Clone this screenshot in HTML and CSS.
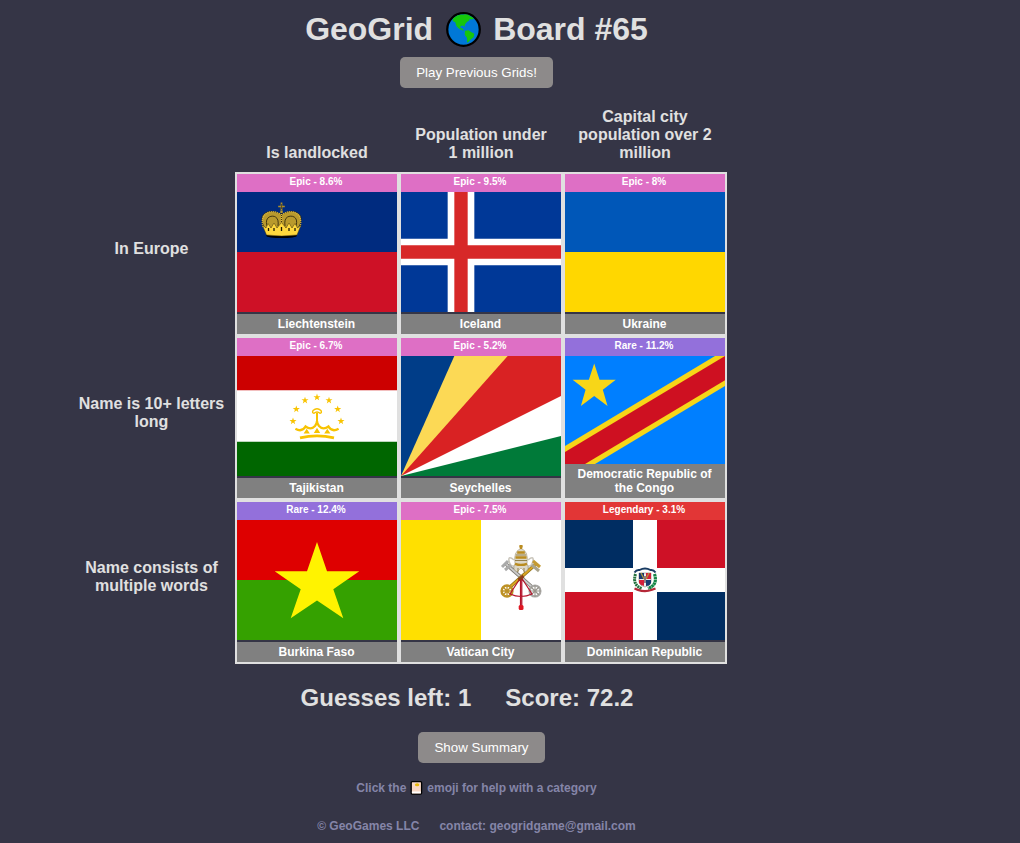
FILE: index.html
```html
<!DOCTYPE html>
<html lang="en">
<head>
<meta charset="utf-8">
<title>GeoGrid Board #65</title>
<link rel="stylesheet" href="styles.css">
</head>
<body>
<svg class="defs" width="0" height="0" aria-hidden="true">
  <defs><polygon id="star" points="0,-10 2.35,-3.09 9.51,-3.09 3.8,1.18 5.88,8.09 0,3.82 -5.88,8.09 -3.8,1.18 -9.51,-3.09 -2.35,-3.09"/></defs>
</svg>
<main class="page">
  <h1 class="title"><span>GeoGrid</span>
    <svg class="globe" viewBox="0 0 34 34">
      <circle cx="17" cy="17" r="15.8" fill="#0078d7" stroke="#000" stroke-width="2.2"/>
      <path fill="#16c60c" d="M7 6 11 3.4 15 2.4 22 3.1 27.2 6 25.3 7.4 23 6.7 22.2 8.5 20.3 9.7 18.5 12 17.8 14.6 16.7 13.1 14.2 13.5 14 15.4 16.4 16.3 17.2 18.2 15 17.6 12.4 16 10.2 13.8 9 10 6.5 8.7ZM17.5 2.2 22 2.6 20.6 5 19 4.5ZM18.4 18.3 22 17.8 24.3 19.5 27.5 21.2 26.8 24.5 24.5 26.3 22 28.8 20.5 29.8 20.4 25.2 18.2 22.2Z"/>
    </svg>
    <span>Board #65</span></h1>
  <button class="button">Play Previous Grids!</button>

  <section class="board">
    <div></div>
    <h2 class="column-label">Is landlocked</h2>
    <h2 class="column-label">Population under 1 million</h2>
    <h2 class="column-label">Capital city population over 2 million</h2>

    <h2 class="row-label">In Europe</h2>
    <div class="cell">
      <div class="rarity epic">Epic - 8.6%</div>
      <svg class="flag" viewBox="0 0 160 120">
        <path fill="#002b7f" d="M0 0h160v60H0z"/><path fill="#ce1126" d="M0 60h160v60H0z"/>
        <ellipse cx="44.6" cy="43.7" rx="15.4" ry="2.4" fill="#000"/>
        <path fill="#b99a2d" stroke="#1b1a12" stroke-width=".6" d="M28 36C24 31 24 24 27 22C32 18 38 19 43.5 22h2C51 19 57 18 62 22C65 24 65 31 61 36Z"/>
        <path fill="none" stroke="#241e0a" stroke-width=".8" d="M30 34C27 24 36 23 38.5 25Q42 27 41 34M59 34C62 24 54 23 50.5 25Q47 27 48 34M44.5 21v12"/>
        <path fill="none" stroke="#e1bd43" stroke-width="1.2" stroke-dasharray="1 1" d="M26 35C22 22 34 16 43 22M63 35C67 22 55 16 46 22M44.5 22v12"/>
        <path fill="#ffd83d" stroke="#4b3d0c" stroke-width=".5" d="M25.3 33 29 36 31 31.5 34 36 37 31 40 36 44.5 30.5 49 36 52 31 55 36 58 31.5 60.5 36 64 33 60 43Q44.5 45 29.5 43Z"/>
        <path stroke="#201a05" stroke-width="1.3" d="M31.5 36v3M37 36v3M44.5 35v4M52 36v3M58 36v3"/>
        <path stroke="#b99a2d" stroke-width="2.4" d="M44.5 18.6v2.5"/><path stroke="#ad8e2a" stroke-width="1.7" d="M44.5 10.5v8M41.2 14.5h6.6"/><path stroke="#111" stroke-width=".5" d="M44.5 12v5"/>
      </svg>
      <div class="country">Liechtenstein</div>
    </div>
    <div class="cell">
      <div class="rarity epic">Epic - 9.5%</div>
      <svg class="flag" viewBox="0 0 160 120">
        <path fill="#003897" d="M0 0h160v120H0z"/>
        <path fill="#fff" d="M46.67 0h26.66v120H46.67zM0 46.67h160v26.66H0z"/>
        <path fill="#d72828" d="M53.33 0h13.34v120H53.33zM0 53.33h160v13.34H0z"/>
      </svg>
      <div class="country">Iceland</div>
    </div>
    <div class="cell">
      <div class="rarity epic">Epic - 8%</div>
      <svg class="flag" viewBox="0 0 160 120"><path fill="#0057b8" d="M0 0h160v60H0z"/><path fill="#ffd700" d="M0 60h160v60H0z"/></svg>
      <div class="country">Ukraine</div>
    </div>

    <h2 class="row-label">Name is 10+ letters long</h2>
    <div class="cell">
      <div class="rarity epic">Epic - 6.7%</div>
      <svg class="flag" viewBox="0 0 160 120">
        <path fill="#fff" d="M0 0h160v120H0z"/><path fill="#c00" d="M0 0h160v34.29H0z"/><path fill="#060" d="M0 85.71h160V120H0z"/>
        <g fill="#f8c300">
          <use href="#star" transform="translate(80 41.3) scale(.37)"/>
          <use href="#star" transform="translate(68 44.4) scale(.37)"/>
          <use href="#star" transform="translate(92 44.4) scale(.37)"/>
          <use href="#star" transform="translate(59.3 53.2) scale(.37)"/>
          <use href="#star" transform="translate(100.7 53.2) scale(.37)"/>
          <use href="#star" transform="translate(56 65.2) scale(.37)"/>
          <use href="#star" transform="translate(104 65.2) scale(.37)"/>
          <path d="M69.7 72.8 72.8 77.5H66.6ZM80 71.8 83.2 77H76.8ZM90.3 72.8 93.4 77.5H87.2Z"/>
        </g>
        <g fill="none" stroke="#f8c300">
          <path stroke-width="2.8" d="M63 81.8Q80 77.8 97 81.8"/>
          <path stroke-width="2.3" d="M58.4 72.8Q65 76.5 68.5 70.5Q74 74.5 78 70Q80 67.5 80 65Q80 67.5 82 70Q86 74.5 91.5 70.5Q95 76.5 101.6 72.8"/>
          <path stroke-width="2" d="M80 57v10"/>
          <path stroke-width="1.4" d="M77 57.3Q74.8 57 76 54.6Q80 50.8 84 54.6Q85.2 57 83 57.3Q80 54.6 77 57.3Z"/>
        </g>
      </svg>
      <div class="country">Tajikistan</div>
    </div>
    <div class="cell">
      <div class="rarity epic">Epic - 5.2%</div>
      <svg class="flag" viewBox="0 0 160 120">
        <path fill="#003d88" d="M0 0h160v120H0z"/>
        <path fill="#fcd955" d="M0 120 53.33 0H160V120Z"/>
        <path fill="#d92223" d="M0 120 106.67 0H160V120Z"/>
        <path fill="#fff" d="M0 120 160 40V120Z"/>
        <path fill="#007a39" d="M0 120 160 80V120Z"/>
      </svg>
      <div class="country">Seychelles</div>
    </div>
    <div class="cell">
      <div class="rarity rare">Rare - 11.2%</div>
      <svg class="flag" viewBox="0 0 160 120" preserveAspectRatio="xMidYMin slice">
        <path fill="#007fff" d="M0 0h160v120H0z"/>
        <path fill="#f7d618" d="M0 90 150 0H160V30L10 120H0Z"/>
        <path fill="#ce1021" d="M0 96 160 0V24.3L0 120Z"/>
        <use href="#star" fill="#f7d618" transform="translate(29.2 31) scale(2.27 2.35)"/>
      </svg>
      <div class="country">Democratic Republic of the Congo</div>
    </div>

    <h2 class="row-label">Name consists of multiple words</h2>
    <div class="cell">
      <div class="rarity rare">Rare - 12.4%</div>
      <svg class="flag" viewBox="0 0 160 120">
        <path fill="#de0000" d="M0 0h160v60H0z"/><path fill="#35a100" d="M0 60h160v60H0z"/>
        <path fill="#fff300" d="M80 22 90 51.3H122.3L96.3 69.3 106.3 98.2 80 80.5 53.7 98.2 63.7 69.3 37.7 51.3H70Z"/>
      </svg>
      <div class="country">Burkina Faso</div>
    </div>
    <div class="cell">
      <div class="rarity epic">Epic - 7.5%</div>
      <svg class="flag" viewBox="0 0 160 120">
        <path fill="#ffe000" d="M0 0h80v120H0z"/><path fill="#fff" d="M80 0h80v120H80z"/>
        <g fill="none">
          <path stroke="#c9c5bb" stroke-width="1.6" d="M113 40q-6-5-5 1t6 5q-5 6 2 6M127 40q6-5 5 1t-6 5q5 6-2 6"/>
          <path stroke="#7b776f" stroke-width="3.6" d="M131 67 105 44"/><path stroke="#ccc" stroke-width="2" d="M131 67 105 44"/>
          <path stroke="#8d701c" stroke-width="3.6" d="M109 67 135 44"/><path stroke="#d9a521" stroke-width="2" d="M109 67 135 44"/>
          <path stroke="#aaa" stroke-width="3" d="M101 47 107 41M104 50 110 45"/>
          <path stroke="#c49a32" stroke-width="3" d="M139 47 132 41"/><path stroke="#aaa48c" stroke-width="3" d="M138 51 131 45"/>
          <circle cx="106" cy="71" r="5.4" stroke="#bd9125" stroke-width="2.5"/><path stroke="#bd9125" stroke-width="1.3" d="M100 71h12M106 65v12M102 67l8 8M110 67l-8 8"/>
          <circle cx="134" cy="71" r="5.4" stroke="#aaa9a6" stroke-width="2.3"/><path stroke="#99958c" stroke-width="1.1" d="M128 71h12M134 65v12M130 67l8 8M138 67l-8 8"/>
        </g>
        <path fill="#ddd7c6" stroke="#a69b7c" stroke-width=".6" d="M114 44Q112 31 120 28.5Q128 31 126 44Q129 49 124 52L120 48 116 52Q111 49 114 44Z"/>
        <path fill="none" stroke="#ba8c20" stroke-width="2.4" d="M116.2 32.5h7.6M114.5 37.5h11M114 43.8Q120 46 126 43.8M120 25v4M118.3 26.4h3.4"/>
        <path fill="none" stroke="#775b18" stroke-width=".7" d="M115 35h10M114 40.5h12M117 48v4M123 48v4"/>
        <path fill="none" stroke="#b5142b" stroke-width="1.2" d="M120 57 109 74Q120 79 131 74L120 57M119.5 58v28M120.8 58v28"/>
        <path fill="none" stroke="#8b3d18" stroke-width="3" d="M117.5 60 122.5 56"/>
        <rect x="117.7" y="85" width="4.8" height="4.9" rx="1.5" fill="#df1722"/>
      </svg>
      <div class="country">Vatican City</div>
    </div>
    <div class="cell">
      <div class="rarity legendary">Legendary - 3.1%</div>
      <svg class="flag" viewBox="0 0 160 120">
        <path fill="#fff" d="M0 0h160v120H0z"/>
        <path fill="#002d62" d="M0 0h68v48H0zM92 72h68v48H92z"/><path fill="#ce1126" d="M92 0h68v48H92zM0 72h68v48H0z"/>
        <path fill="none" stroke="#25713e" stroke-width="3" stroke-dasharray="2 .6" d="M70.5 54Q67 65 77 68.5"/>
        <path fill="none" stroke="#168646" stroke-width="3.2" stroke-dasharray="2.5 .4" d="M89.5 54Q93 65 83 68.5"/>
        <path fill="none" stroke="#183b62" stroke-width="2" d="M69.5 52.5Q71.5 49.5 74.5 50Q80 46.8 85.5 50Q88.5 49.5 90.5 52.5"/>
        <path fill="#eee" stroke="#6d6552" stroke-width=".5" d="M74 53H86V62Q85 66 80 67Q75 66 74 62Z"/>
        <path fill="#183a71" d="M74 53h5v6h-5zM81 60h5v3q-1 3-5 3z"/><path fill="#d51e39" d="M81 53h5v6h-5zM74 60h5v6q-4-1-5-3z"/>
        <path stroke="#ad9940" stroke-width="1.3" d="M76 53l3 6M84 53l-3 6"/><path stroke="#543340" stroke-width="1.2" d="M80 56v7"/>
        <path fill="none" stroke="#b52838" stroke-width="2.3" d="M69.5 68.5 73 69.8Q80 72.5 87 69.8L90.5 68.5"/>
      </svg>
      <div class="country">Dominican Republic</div>
    </div>
  </section>

  <div class="status"><span>Guesses left: 1</span><span>Score: 72.2</span></div>
  <button class="button summary">Show Summary</button>
  <p class="help">Click the
    <svg class="card" viewBox="0 0 12 14"><rect x=".7" y=".7" width="10.4" height="12.4" rx="1" fill="#f8d7c4" stroke="#000" stroke-width="1.3"/><path fill="#fff" d="M1.4 10.5h9v1.8h-9z"/><ellipse cx="6.6" cy="3.8" rx="2.2" ry="1.5" fill="#e7b80b"/></svg>
    emoji for help with a category</p>
  <footer class="footer"><span>© GeoGames LLC</span><span>contact: geogridgame@gmail.com</span></footer>
</main>
</body>
</html>
```
FILE: styles.css
```css
* { box-sizing: border-box; }
body {
  margin: 0;
  background: #353546;
  color: #e0e0e0;
  font-family: "Liberation Sans", Arial, sans-serif;
  font-weight: bold;
}
.defs { display: block; height: 0; }
.page {
  width: 953px;
  height: 843px;
  display: flex;
  flex-direction: column;
  align-items: center;
  overflow: hidden;
}
.title {
  display: flex;
  align-items: center;
  margin: 11px 0 10px;
  font-size: 32px;
  line-height: 36px;
}
.globe { width: 35px; height: 35px; margin: 0 12.5px; }
.button {
  height: 31px;
  flex: none;
  padding: 0 16px;
  border: 0;
  border-radius: 5px;
  background: #8d8a8a;
  color: #fff;
  font: 500 13.333px "Liberation Sans", Arial, sans-serif;
}
.board {
  align-self: flex-start;
  display: grid;
  grid-template-columns: repeat(4, 164px);
  grid-template-rows: 84px repeat(3, 164px);
  margin-left: 71px;
}
.column-label, .row-label {
  margin: 0;
  font-size: 16px;
  line-height: 18px;
  text-align: center;
}
.column-label { align-self: end; padding: 0 13px 10px; }
.row-label { align-self: center; padding: 0 7px 10px 4px; }
.cell {
  display: flex;
  flex-direction: column;
  border: 2px solid #e0e0e0;
  overflow: hidden;
  color: #fff;
  text-align: center;
}
.rarity { flex: 0 0 18px; padding-right: 2px; font-size: 10px; line-height: 16px; }
.epic { background: #de6fc5; }
.rare { background: #9370db; }
.legendary { background: #e23636; }
.flag { width: 160px; height: 120px; flex: 0 1 120px; min-height: 0; }
.country {
  flex: none;
  margin-top: auto;
  padding: 3px 9px 3px 8px;
  background: #808080;
  font-size: 12px;
  line-height: 14px;
}
.status {
  display: flex;
  gap: 34px;
  margin: 20px 19px 20px 0;
  font-size: 24px;
  line-height: 28px;
}
.summary { margin-left: 10px; }
.help, .footer { color: #8585a8; font-size: 12px; line-height: 14px; }
.help { display: flex; align-items: center; gap: 4px; margin: 18px 0 0; }
.card { width: 13px; height: 14px; }
.footer { display: flex; gap: 20px; margin-top: 24px; }
```
